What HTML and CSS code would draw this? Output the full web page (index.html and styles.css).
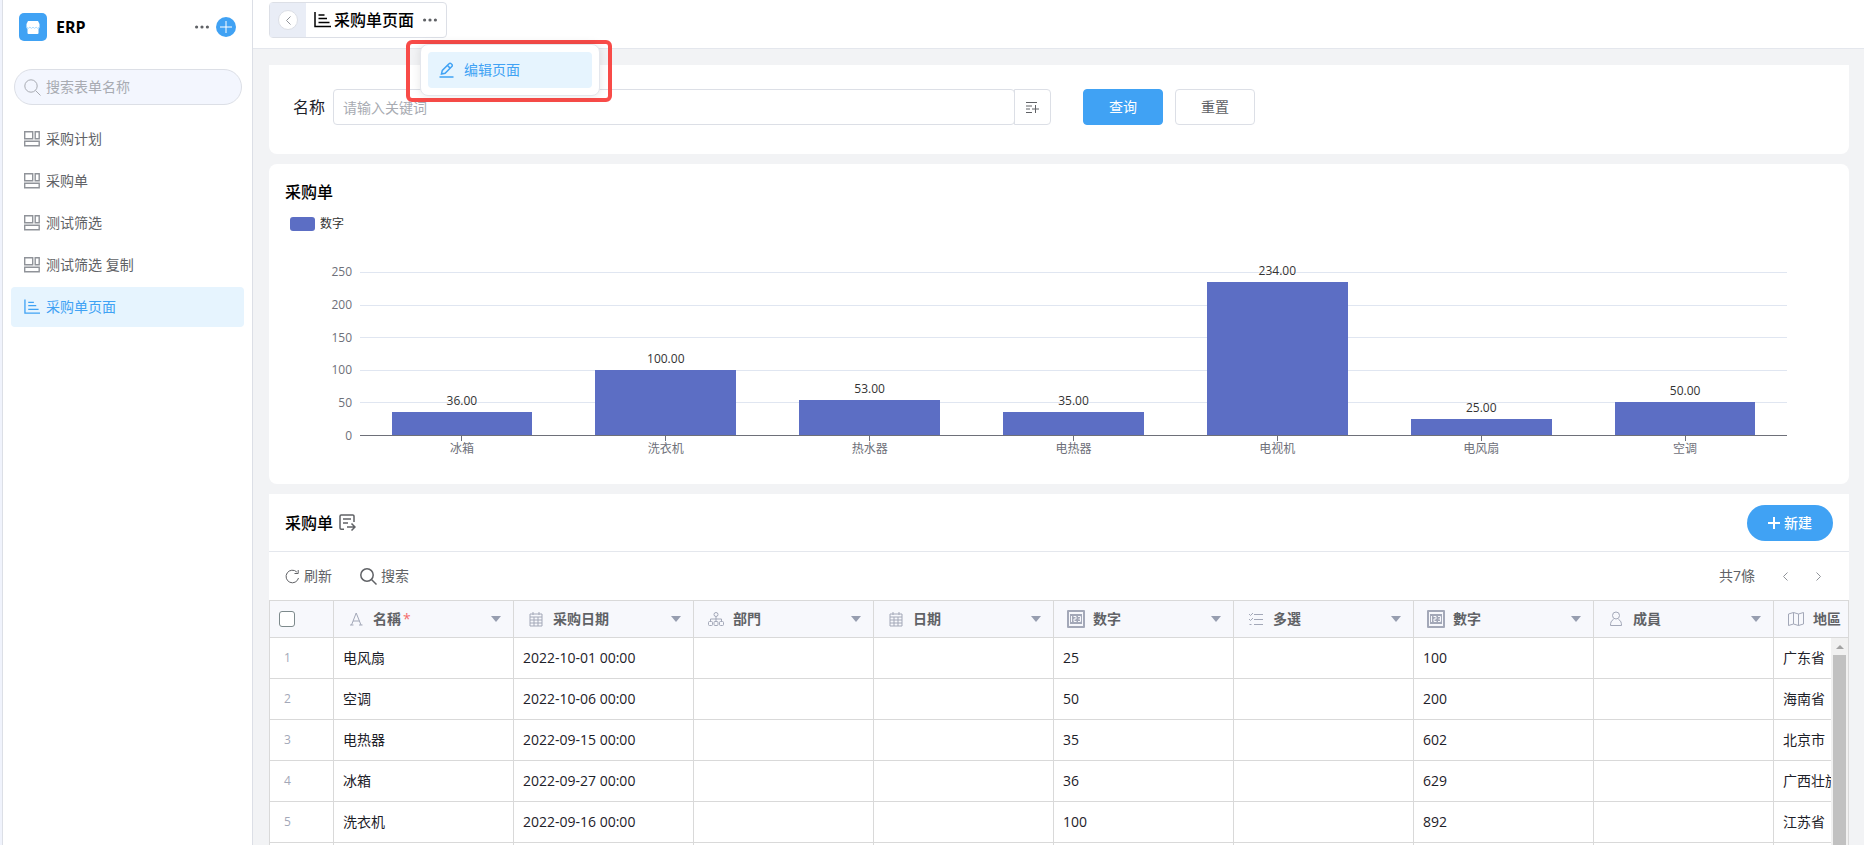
FILE: index.html
```html
<!DOCTYPE html>
<html lang="zh-CN">
<head>
    <meta charset="UTF-8">
    <meta name="viewport" content="width=device-width, initial-scale=1.0">
    <title>ERP</title>
    <link rel="stylesheet" href="styles.css">
</head>
<body>
    <!-- Shared icons -->
    <svg class="sprite" aria-hidden="true">
        <symbol id="i-form" viewBox="0 0 16 16">
            <path d="M.7.7h8v7.100h-8zM11.200.7h4v7.100h-4zM.7 10.200h14.500v4.500H.7z"/>
        </symbol>
        <symbol id="i-page" viewBox="0 0 17 16">
            <path d="M1 0v14.500h16M4.500 3h6M4.500 6.500h8.500M4.500 10.500h11"/>
        </symbol>
        <symbol id="i-search" viewBox="0 0 17 17">
            <circle cx="7" cy="7" r="6.200"/><path d="M11.500 11.500l5 5"/>
        </symbol>
        <symbol id="i-dots" viewBox="0 0 14 4">
            <path class="fill" d="M0 2a1.600 1.600 0 1 0 3.200 0a1.600 1.600 0 1 0-3.200 0M5.400 2a1.600 1.600 0 1 0 3.200 0a1.600 1.600 0 1 0-3.200 0M10.800 2a1.600 1.600 0 1 0 3.200 0a1.600 1.600 0 1 0-3.200 0"/>
        </symbol>
        <symbol id="i-calendar" viewBox="0 0 18 18">
            <path d="M3 4h12v12H3zM3 7h12M3 10h12M3 13h12M7 7v9M11 7v9M6 2v3M12 2v3"/>
        </symbol>
        <symbol id="i-number" viewBox="0 0 18 18">
            <path class="fill" fill-rule="evenodd" d="M1 0h16a1 1 0 0 1 1 1v16a1 1 0 0 1-1 1H1a1 1 0 0 1-1-1V1a1 1 0 0 1 1-1zM2 2v14h14V2z"/>
            <path class="fill" d="M3 4h12v10H3z"/>
            <path class="cut" d="M4.500 6v6M6.500 6.500h2.500v2.500h-2v2.500h2.500M11 6.500h2.500v5H11M11.500 9h2"/>
        </symbol>
    </svg>

    <aside class="sidebar">
        <div class="app-head">
            <span class="app-logo">
                <svg width="14" height="13" viewBox="0 0 14 13"><path fill="#fff" d="M2 0h10l1.500 3v3c0 1-.5 1.500-1 1.500V12a1 1 0 0 1-1 1h-9a1 1 0 0 1-1-1V7.500C.8 7.500.5 7 .5 6V3z"/><path fill="none" stroke="#a8daff" d="M.8 6.200q1.500 2.400 3.100 0q1.600 2.400 3.100 0q1.600 2.400 3.100 0q1.600 2.400 3.100 0"/></svg>
            </span>
            <h1>ERP</h1>
            <button class="icon-btn" aria-label="更多"><svg width="14" height="4"><use href="#i-dots"/></svg></button>
            <button class="add-btn" aria-label="添加"><svg width="12" height="12" viewBox="0 0 12 12"><path d="M6 0v12M0 6h12"/></svg></button>
        </div>
        <div class="search-box">
            <svg width="17" height="17"><use href="#i-search"/></svg>
            <input type="text" placeholder="搜索表单名称" aria-label="搜索表单名称">
        </div>
        <nav class="menu">
            <a href="#"><svg width="16" height="16"><use href="#i-form"/></svg>采购计划</a>
            <a href="#"><svg width="16" height="16"><use href="#i-form"/></svg>采购单</a>
            <a href="#"><svg width="16" height="16"><use href="#i-form"/></svg>测试筛选</a>
            <a href="#"><svg width="16" height="16"><use href="#i-form"/></svg>测试筛选 复制</a>
            <a href="#" class="active"><svg width="17" height="16"><use href="#i-page"/></svg>采购单页面</a>
        </nav>
    </aside>

    <div class="main">
        <header class="topbar">
            <div class="page-tab">
                <div class="back-wrap">
                    <button class="back" aria-label="返回"><svg width="5" height="9" viewBox="0 0 5 9"><path d="M4.500.5l-4 4l4 4"/></svg></button>
                </div>
                <svg class="tab-icon" width="17" height="16"><use href="#i-page"/></svg>
                <h2>采购单页面</h2>
                <button class="icon-btn" aria-label="更多"><svg width="14" height="4"><use href="#i-dots"/></svg></button>

                <div class="callout">
                    <div class="dropdown">
                        <button class="dropdown-item">
                            <svg width="15" height="16" viewBox="0 0 15 16"><path d="M.5 15h14M2.500 12l.8-3.600L10 1.700a1.500 1.500 0 0 1 2.200 0l.6.600a1.500 1.500 0 0 1 0 2.200L6.100 11.200zM8.500 3.500l2.600 2.600"/></svg>
                            编辑页面
                        </button>
                    </div>
                </div>
            </div>
        </header>

        <div class="content">
            <!-- Filter -->
            <form class="card filter">
                <div class="field">
                    <label for="name">名称</label>
                    <input type="text" id="name" placeholder="请输入关键词">
                    <button type="button" class="addon" aria-label="批量"><svg width="13" height="13" viewBox="0 0 13 13"><path d="M0 1.500h11M0 5h6M0 8h4M0 11.500h6M9.500 4v8M6 8h7"/></svg></button>
                </div>
                <button type="button" class="btn primary">查询</button>
                <button type="reset" class="btn">重置</button>
            </form>

            <!-- Bar chart -->
            <section class="card chart-card">
                <h3>采购单</h3>
                <div class="legend"><span class="swatch"></span>数字</div>
                <div class="chart">
                    <div class="y-axis">
                        <span>250</span><span>200</span><span>150</span><span>100</span><span>50</span><span>0</span>
                    </div>
                    <div class="grid-lines"><i></i><i></i><i></i><i></i><i></i></div>
                    <div class="bars">
                        <div class="col"><span>36.00</span><div class="bar" style="height: 14.4%"></div></div>
                        <div class="col"><span>100.00</span><div class="bar" style="height: 40%"></div></div>
                        <div class="col"><span>53.00</span><div class="bar" style="height: 21.2%"></div></div>
                        <div class="col"><span>35.00</span><div class="bar" style="height: 14%"></div></div>
                        <div class="col"><span>234.00</span><div class="bar" style="height: 93.6%"></div></div>
                        <div class="col"><span>25.00</span><div class="bar" style="height: 10%"></div></div>
                        <div class="col"><span>50.00</span><div class="bar" style="height: 20%"></div></div>
                    </div>
                    <div class="x-axis">
                        <span>冰箱</span><span>洗衣机</span><span>热水器</span><span>电热器</span><span>电视机</span><span>电风扇</span><span>空调</span>
                    </div>
                </div>
            </section>

            <!-- Data table -->
            <section class="table-card">
                <div class="table-head">
                    <h3>采购单</h3>
                    <svg width="17" height="17" viewBox="0 0 17 17"><path d="M5 15.300H2.200a1.200 1.200 0 0 1-1.200-1.200V2.200A1.200 1.200 0 0 1 2.200 1h11.600A1.200 1.200 0 0 1 15 2.200V8M4 5h8M4 9h5M8 13h7.500M12.500 9.500l3.500 3.500l-3.500 3.500"/></svg>
                    <button class="create-btn"><svg width="12" height="12" viewBox="0 0 12 12"><path d="M6 0v12M0 6h12"/></svg>新建</button>
                </div>
                <div class="toolbar">
                    <button class="tool"><svg width="15" height="15" viewBox="0 0 15 15"><path d="M13.500 9A6.300 6.300 0 1 1 11.800 3M13.200 1v3.500H9.500"/></svg>刷新</button>
                    <button class="tool search"><svg width="17" height="17"><use href="#i-search"/></svg>搜索</button>
                    <span class="total">共7條</span>
                    <button class="pager" aria-label="上一页"><svg width="5" height="9" viewBox="0 0 5 9"><path d="M4.500.5l-4 4l4 4"/></svg></button>
                    <button class="pager" aria-label="下一页"><svg width="5" height="9" viewBox="0 0 5 9"><path d="M.5.5l4 4l-4 4"/></svg></button>
                </div>
                <div class="table-wrap">
                    <table>
                        <thead>
                            <tr>
                                <th class="index"><input type="checkbox" aria-label="全选"></th>
                                <th><div class="th"><svg width="18" height="18" viewBox="0 0 18 18"><path d="M4.500 15L9.200 3L14 15M6 11h6.500M3 15h3.500M12 15h3.500"/></svg>名稱<em>*</em></div></th>
                                <th><div class="th"><svg width="18" height="18"><use href="#i-calendar"/></svg>采购日期</div></th>
                                <th><div class="th"><svg width="18" height="18" viewBox="0 0 18 18"><circle cx="9" cy="4.500" r="2"/><rect x="1.500" y="11.500" width="4" height="4" rx="1"/><rect x="7" y="11.500" width="4" height="4" rx="1"/><rect x="12.500" y="11.500" width="4" height="4" rx="1"/><path d="M9 6.500v5M3.500 11.500V9h11v2.500"/></svg>部門</div></th>
                                <th><div class="th"><svg width="18" height="18"><use href="#i-calendar"/></svg>日期</div></th>
                                <th><div class="th"><svg width="18" height="18"><use href="#i-number"/></svg>数字</div></th>
                                <th><div class="th"><svg width="18" height="18" viewBox="0 0 18 18"><path d="M7 4.500h9M7 9.500h9M7 14.500h9M2 4l1.500 1.500L6 3M2 9l1.500 1.500L6 8M2.500 14.500h2"/></svg>多選</div></th>
                                <th><div class="th"><svg width="18" height="18"><use href="#i-number"/></svg>數字</div></th>
                                <th><div class="th"><svg width="18" height="18" viewBox="0 0 18 18"><circle cx="9" cy="5.500" r="3.500"/><path d="M6.500 9.500C4 10.500 3.500 13 3.500 15.500h11c0-2.500-.5-5-3-6"/></svg>成員</div></th>
                                <th><div class="th"><svg width="18" height="18" viewBox="0 0 18 18"><path d="M1.500 4l5-1.500l5 1.500l5-1.500V14l-5 1.500l-5-1.500l-5 1.500zM6.500 2.500V14M11.500 4v11.500"/></svg>地區</div></th>
                            </tr>
                        </thead>
                        <tbody>
                            <tr><td class="index">1</td><td>电风扇</td><td>2022-10-01 00:00</td><td></td><td></td><td>25</td><td></td><td>100</td><td></td><td>广东省</td></tr>
                            <tr><td class="index">2</td><td>空调</td><td>2022-10-06 00:00</td><td></td><td></td><td>50</td><td></td><td>200</td><td></td><td>海南省</td></tr>
                            <tr><td class="index">3</td><td>电热器</td><td>2022-09-15 00:00</td><td></td><td></td><td>35</td><td></td><td>602</td><td></td><td>北京市</td></tr>
                            <tr><td class="index">4</td><td>冰箱</td><td>2022-09-27 00:00</td><td></td><td></td><td>36</td><td></td><td>629</td><td></td><td>广西壮族</td></tr>
                            <tr><td class="index">5</td><td>洗衣机</td><td>2022-09-16 00:00</td><td></td><td></td><td>100</td><td></td><td>892</td><td></td><td>江苏省</td></tr>
                            <tr><td class="index"></td><td></td><td></td><td></td><td></td><td></td><td></td><td></td><td></td><td></td></tr>
                        </tbody>
                    </table>
                    <div class="scrollbar"><span class="arrow"></span><span class="thumb"></span></div>
                </div>
            </section>
        </div>
    </div>
</body>
</html>
```
FILE: styles.css
```css
* {
    box-sizing: border-box;
}
body {
    margin: 0;
    padding-left: 2px;
    height: 100vh;
    overflow: hidden;
    display: flex;
    background: #f0f3fc;
    color: #606266;
    font-family: "Open Sans", "Noto Sans CJK SC", sans-serif;
    font-size: 14px;
    line-height: 20px;
}
h1, h2, h3 {
    margin: 0;
    color: #000;
    font-size: 16px;
    line-height: 24px;
    font-weight: 500;
}
a {
    color: inherit;
    text-decoration: none;
}
button, input {
    font: inherit;
    color: inherit;
}
button {
    padding: 0;
    border: none;
    background: none;
    cursor: pointer;
}
input::placeholder {
    color: #a8abb2;
    opacity: 1;
}
svg {
    flex: none;
    fill: none;
    stroke: currentColor;
}
.sprite {
    position: absolute;
    width: 0;
    height: 0;
}
.fill {
    fill: currentColor;
    stroke: none;
}
.cut {
    stroke: #f7f8fc;
}

/* Sidebar */
.sidebar {
    flex: none;
    width: 251px;
    background: #fff;
    border-left: 1px solid #dcdfe6;
    border-right: 1px solid #dcdfe6;
}
.app-head {
    display: flex;
    align-items: center;
    height: 54px;
    padding: 0 16px;
}
.app-logo {
    display: flex;
    align-items: center;
    justify-content: center;
    width: 28px;
    height: 28px;
    margin-right: 9px;
    border-radius: 5px;
    background: #40a2f4;
}
.app-logo svg {
    stroke: none;
}
.app-head h1 {
    flex: 1;
    font-weight: 700;
}
.icon-btn {
    display: flex;
    align-items: center;
    height: 20px;
    color: #606266;
}
.add-btn {
    display: flex;
    align-items: center;
    justify-content: center;
    width: 20px;
    height: 20px;
    margin-left: 7px;
    border-radius: 50%;
    background: #40a2f4;
    color: #fff;
}
.search-box {
    display: flex;
    align-items: center;
    height: 36px;
    margin: 15px 10px 14px 11px;
    padding: 0 9px;
    border: 1px solid #dcdfe6;
    border-radius: 18px;
    background: #f3f6fe;
    color: #a8abb2;
}
.search-box input {
    flex: 1;
    min-width: 0;
    margin-left: 5px;
    padding: 0;
    border: none;
    outline: none;
    background: none;
}
.menu {
    display: flex;
    flex-direction: column;
    gap: 2px;
    padding: 0 8px;
}
.menu a {
    display: flex;
    align-items: center;
    gap: 6px;
    height: 40px;
    padding-left: 13px;
    border-radius: 4px;
}
.menu svg {
    width: 16px;
    color: #909399;
    stroke-width: 1.4;
}
.menu .active, .menu .active svg {
    color: #40a2f4;
}
.menu .active {
    background: #e6f4fe;
}

/* Top bar */
.main {
    flex: 1;
    min-width: 0;
    background: #f2f3f5;
}
.topbar {
    display: flex;
    height: 49px;
    padding: 2px 16px;
    background: #fff;
    border-bottom: 1px solid #e4e7ed;
}
.page-tab {
    position: relative;
    display: flex;
    align-items: center;
    height: 36px;
    padding-right: 9px;
    border: 1px solid #dcdfe6;
    border-radius: 4px;
    color: #000;
}
.page-tab h2 {
    margin: 0 9px 0 3px;
}
.tab-icon {
    margin-left: 8px;
    stroke-width: 1.5;
}
.back-wrap {
    display: flex;
    align-items: center;
    justify-content: center;
    width: 36px;
    height: 34px;
    background: #e9edf6;
}
.back {
    display: flex;
    align-items: center;
    justify-content: center;
    width: 20px;
    height: 20px;
    border: 1px solid #dcdfe6;
    border-radius: 50%;
    background: #fff;
    color: #909399;
}
.callout {
    position: absolute;
    z-index: 2;
    top: 37px;
    left: 136px;
    width: 206px;
    height: 62px;
    padding: 0 8px 2px 10px;
    border: 4px solid #f84b48;
    border-radius: 6px;
}
.dropdown {
    height: 52px;
    padding: 7px;
    border: 1px solid #e4e7ed;
    border-radius: 8px;
    background: #fff;
    box-shadow: 0 0 10px rgba(0, 0, 0, 0.1);
}
.dropdown-item {
    display: flex;
    align-items: center;
    gap: 10px;
    width: 100%;
    height: 36px;
    padding-left: 11px;
    border-radius: 4px;
    background: #e6f4fe;
    color: #40a2f4;
}
.dropdown-item svg {
    stroke-width: 1.5;
}

/* Content */
.content {
    display: flex;
    flex-direction: column;
    gap: 10px;
    padding: 16px 15px 0 16px;
}
.card {
    border-radius: 8px;
    background: #fff;
}
.filter {
    display: flex;
    padding: 24px 0 29px;
    border-radius: 0 0 8px 8px;
}
.field {
    display: flex;
    align-items: center;
    width: 782px;
    max-width: 60%;
    margin-right: 32px;
    padding-left: 24px;
}
.field label {
    margin-right: 8px;
    color: #1d2129;
    font-size: 16px;
}
.field input {
    flex: 1;
    min-width: 0;
    height: 36px;
    padding: 0 9px;
    border: 1px solid #dcdfe6;
    border-radius: 4px;
    outline: none;
}
.addon {
    display: flex;
    align-items: center;
    justify-content: center;
    width: 37px;
    height: 36px;
    margin-left: -1px;
    border: 1px solid #dcdfe6;
    border-radius: 0 4px 4px 0;
}
.btn {
    width: 80px;
    height: 36px;
    margin-right: 12px;
    border: 1px solid #dcdfe6;
    border-radius: 4px;
    background: #fff;
}
.btn.primary {
    border-color: #40a2f4;
    background: #40a2f4;
    color: #fff;
}

/* Chart */
.chart-card {
    padding: 16px 62px 27px 16px;
}
.legend {
    display: flex;
    align-items: center;
    gap: 5px;
    margin: 12px 0 40px 5px;
    font-size: 12px;
    line-height: 16px;
    color: #333;
}
.swatch {
    width: 25px;
    height: 14px;
    border-radius: 3px;
    background: #5c6ec4;
}
.chart {
    display: grid;
    grid-template-columns: 67px 1fr;
    grid-template-rows: 164px auto;
    column-gap: 8px;
    font-size: 12px;
    line-height: 16px;
    color: #6e7079;
}
.y-axis {
    display: flex;
    flex-direction: column;
    justify-content: space-between;
    text-align: right;
}
.y-axis span {
    height: 0;
    line-height: 0;
}
.grid-lines, .bars {
    grid-column: 2;
    grid-row: 1;
}
.grid-lines {
    display: flex;
    flex-direction: column;
    border-bottom: 1px solid #6e7079;
}
.grid-lines i {
    flex: 1;
    border-top: 1px solid #e0e6f1;
}
.bars, .x-axis {
    display: grid;
    grid-template-columns: repeat(7, 1fr);
}
.col {
    display: flex;
    flex-direction: column;
    justify-content: flex-end;
    align-items: center;
    height: 163px;
}
.col span {
    margin-bottom: 3px;
    color: #333;
    text-shadow: 0 0 2px #fff, 0 0 2px #fff;
}
.bar {
    flex: none;
    width: 69%;
    background: #5c6ec4;
}
.x-axis {
    grid-column: 2;
}
.x-axis span {
    display: flex;
    flex-direction: column;
    align-items: center;
}
.x-axis span::before {
    content: "";
    width: 1px;
    height: 5px;
    background: #6e7079;
}

/* Table */
.table-card {
    background: #fff;
}
.table-head {
    display: flex;
    align-items: center;
    gap: 6px;
    height: 58px;
    padding: 0 16px;
    border-bottom: 1px solid #e4e7ed;
}
.table-head > svg {
    stroke-width: 1.5;
}
.create-btn {
    display: flex;
    align-items: center;
    justify-content: center;
    gap: 4px;
    width: 86px;
    height: 36px;
    margin-left: auto;
    border-radius: 18px;
    background: #40a2f4;
    color: #fff;
    font-weight: 500;
}
.create-btn svg {
    stroke-width: 2;
}
.toolbar {
    display: flex;
    align-items: center;
    height: 48px;
    padding: 0 28px 0 16px;
}
.tool {
    display: flex;
    align-items: center;
    gap: 4px;
    margin-right: 28px;
}
.search svg {
    stroke-width: 1.5;
}
.total {
    margin: 0 28px 0 auto;
}
.pager {
    display: flex;
    color: #909399;
}
.pager + .pager {
    margin-left: 28px;
}
.table-wrap {
    position: relative;
    overflow: hidden;
    border: 1px solid #d9d9d9;
}
table {
    width: 1684px;
    min-width: 100%;
    table-layout: fixed;
    border-collapse: separate;
    border-spacing: 0;
    color: #1d2129;
}
th, td {
    height: 41px;
    padding: 0 9px;
    border-right: 1px solid #d9d9d9;
    border-bottom: 1px solid #d9d9d9;
    text-align: left;
}
th {
    height: 37px;
    padding: 0 12px 0 13px;
    background: #f7f8fc;
    color: #606266;
}
.th {
    display: flex;
    align-items: center;
}
.th svg {
    margin-right: 8px;
    color: #a3a8b8;
}
.th em {
    margin-left: 2px;
    color: #f56c6c;
    font-style: normal;
    font-weight: 400;
}
.th::after {
    content: "";
    margin-left: auto;
    border: 5px solid transparent;
    border-top: 6px solid #979eb0;
    border-bottom: none;
}
.index {
    width: 64px;
}
th.index {
    padding: 0 9px;
}
td.index {
    padding-left: 14px;
    color: #a3a8b8;
    font-size: 12px;
}
.index input {
    display: block;
    appearance: none;
    width: 16px;
    height: 16px;
    margin: 0;
    border: 1px solid #7d8a8c;
    border-radius: 3px;
    background: #fff;
}
.scrollbar {
    position: absolute;
    top: 37px;
    right: 0;
    bottom: 0;
    width: 17px;
    display: flex;
    flex-direction: column;
    align-items: center;
    background: #f1f1f1;
}
.arrow {
    margin: 7px 0 6px;
    border: 4px solid transparent;
    border-bottom: 4px solid #a3a3a3;
    border-top: none;
}
.thumb {
    flex: 1;
    width: 13px;
    background: #c1c1c1;
}
```
